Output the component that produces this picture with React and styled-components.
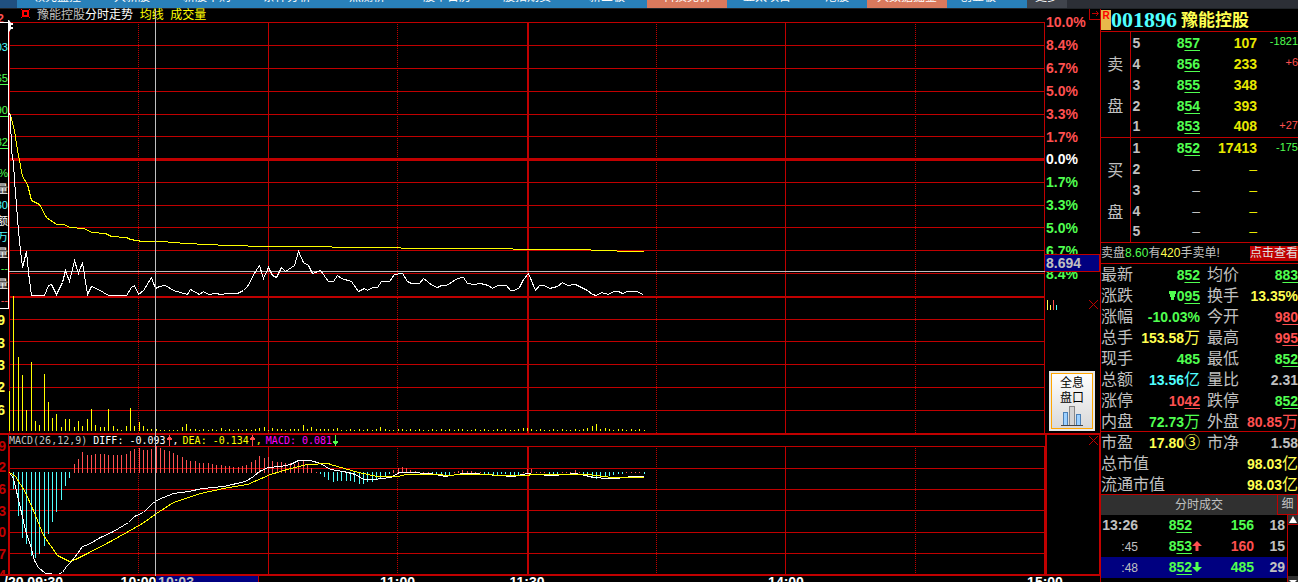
import React from "react";
import styled, { createGlobalStyle } from "styled-components";

const C = {
  line: "#c00000",
  red: "#ff5050",
  green: "#50ff50",
  yellow: "#ffff50",
  pure: "#ffff00",
  volume: "#e8e800",
  cyan: "#50ffff",
  grey: "#c0c0c0",
  white: "#ffffff",
  magenta: "#ff00ff",
  navy: "#000080",
};

const SANS = '"Liberation Sans", "Noto Sans CJK SC", sans-serif';
const SMALL = '"DejaVu Sans Mono", "Noto Sans CJK SC", monospace';

const Global = createGlobalStyle`
  *, *::before, *::after { box-sizing: border-box; }
  body { margin: 0; background: #000; color: ${C.grey}; font-family: ${SANS}; overflow: hidden; }
  button { margin: 0; padding: 0; border: 0; background: none; color: inherit; font: inherit; cursor: pointer; }
  table { border-collapse: collapse; border-spacing: 0; }
  td, th { padding: 0; font-weight: inherit; }
  svg { display: block; }
`;

const Page = styled.div`
  height: 100vh;
  display: flex;
  flex-direction: column;
  overflow: hidden;
`;

/* ---------- top tabs ---------- */
const TabBar = styled.nav`
  flex: none;
  display: flex;
  height: 9px;
  padding-left: 17px;
  overflow: hidden;
  border-bottom: 1px solid #202428;
  background: linear-gradient(90deg, #205080 0 17px, #2c2f36 17px);
`;

const Tab = styled.a`
  flex: none;
  display: flex;
  justify-content: center;
  align-items: flex-end;
  width: ${(p) => p.$w}px;
  padding: 0 ${(p) => p.$trail || 0}px 4px 0;
  background: ${(p) => p.$bg || "#2980b9"};
  color: #fff;
  font-size: 12px;
  line-height: 14px;
  text-decoration: none;
  white-space: nowrap;
`;

const TABS = [
  ["领先监控", 80], ["大新股", 70], ["新股申购", 80], ["条件分析", 80], ["热测桥", 80],
  ["股市日历", 80], ["股指期货", 80], ["新三板", 80], ["科技竞价", 80, "#d9795d"],
  ["亚太项目", 80], ["港股", 60], ["大数据掘金", 80, "#d9795d"],
  ["创业板", 80, null, 18], ["更多", 40, "#40444c"],
];

/* ---------- frame ---------- */
const Body = styled.main`
  flex: 1;
  min-height: 0;
  display: flex;
`;

const Main = styled.section`
  flex: 1;
  min-width: 0;
`;

const Charts = styled.div`
  position: relative;
`;

const Panel = styled.div`
  display: grid;
  grid-template-columns: 9px minmax(0, 1fr) 55px;
  border-bottom: 2px solid ${C.line};
`;

const PlotColumn = styled.div`
  min-width: 0;
`;

const Plot = styled.svg`
  width: 100%;
  height: ${(p) => p.$h}px;
  shape-rendering: crispEdges;
`;

const ChartTitle = styled.div`
  display: flex;
  align-items: center;
  height: 13px;
  padding-left: 12px;
  font-size: 12px;
  line-height: 13px;
  white-space: pre;
`;

const IndicatorTitle = styled.div`
  display: flex;
  align-items: center;
  height: 11px;
  font: 10px/11px ${SMALL};
  white-space: pre;
`;

const Ink = styled.span`
  margin-right: ${(p) => p.$gap || 0}px;
  color: ${(p) => p.$c};
`;

const TitleIcon = styled.svg`
  flex: none;
  width: 9px;
  height: 9px;
  margin: 0 7px 4px 0;
  shape-rendering: crispEdges;
`;

const CrossLine = styled.div`
  position: absolute;
  top: 0;
  bottom: 0;
  left: calc(9px + (100% - 64px) * 0.141);
  width: 1px;
  background: ${C.grey};
`;

const Handle = styled.svg`
  position: absolute;
  top: 11px;
  left: 8px;
  width: 6px;
  height: 12px;
`;

/* ---------- left gutter ---------- */
const Gutter = styled.div`
  min-width: 0;
  overflow: hidden;
  display: flex;
  flex-direction: column;
  border-right: ${(p) => (p.$edge ? `1px solid ${C.line}` : "0")};
`;

const GutterTop = styled.div`
  display: flex;
  justify-content: flex-end;
  align-items: center;
  height: 13px;
  padding: 6px 5px 0 0;
  color: ${C.red};
  font-size: 12px;
  font-weight: bold;
`;

const Popup = styled.div`
  display: flex;
  flex-direction: column;
  height: 287px;
  border: 1px solid #fff;
  border-left: 0;
`;

const PopupLine = styled.div`
  flex: 1;
  display: flex;
  justify-content: flex-end;
  align-items: center;
  color: ${(p) => p.$c};
  font: 11px/14px ${SANS};
  white-space: nowrap;
  text-decoration: ${(p) => (p.$u ? "underline" : "none")};
  text-underline-offset: 2px;
`;

const Scale = styled.div`
  display: flex;
  flex-direction: column;
  flex: none;
  height: ${(p) => p.$h}px;
  margin-bottom: ${(p) => p.$mb || 0}px;
  color: ${(p) => p.$c};
  font-size: 14px;
  font-weight: bold;
`;

const ScaleMark = styled.div`
  flex: 1;
  display: flex;
  justify-content: flex-end;
  align-items: center;
  padding-right: ${(p) => p.$pr}px;
`;

const POPUP = [
  ["", ""], ["03", C.cyan], ["", ""], ["65", C.green, 1], ["", ""], ["90", C.green, 1],
  ["", ""], ["82", C.green, 1], ["", ""], ["6%", C.green], ["量", C.white], ["80", C.cyan],
  ["额", C.white], ["万", C.cyan], ["量", C.white], ["--", C.green], ["量", C.white], ["--", C.red],
];

/* ---------- right axis ---------- */
const Axis = styled.div`
  position: relative;
  display: flex;
  flex-direction: column;
  padding-top: 2px;
`;

const Percents = styled.div`
  display: flex;
  flex-direction: column;
  height: 274px;
`;

const Percent = styled.div`
  flex: 1;
  display: flex;
  align-items: center;
  padding-left: 1px;
  color: ${(p) => p.$c};
  font-size: 14px;
  font-weight: bold;
`;

const PriceFlag = styled.div`
  position: absolute;
  top: 245px;
  left: 0;
  right: 0;
  height: 18px;
  border: 1px solid ${C.line};
  border-left: 0;
  background: ${C.navy};
  color: ${C.grey};
  font-size: 14px;
  font-weight: bold;
  line-height: 16px;
  padding-left: 1px;
`;

const AxisTools = styled.div`
  display: flex;
  justify-content: space-between;
  align-items: center;
  margin-top: 14px;
  padding: 0 2px;
`;

const CornerButton = styled.button`
  position: absolute;
  top: 0;
  right: 0;
  width: 11px;
  height: 11px;
  border-left: 1px solid ${C.line};
  border-bottom: 1px solid ${C.line};
`;

const PlainButton = styled.button`
  width: 9px;
  height: 9px;
`;

const HoloButton = styled.button`
  display: flex;
  flex-direction: column;
  align-items: center;
  width: 46px;
  height: 60px;
  margin: auto 0 2px 4px;
  padding: 3px 0 0;
  border: 2px solid #e8e8e8;
  background: linear-gradient(#fff, #d8d8d8);
  box-shadow: inset 0 0 0 1px #ffa500;
  color: #000;
  font-size: 12px;
  line-height: 15px;
`;

const IndicatorSide = styled.div`
  display: flex;
  justify-content: flex-end;
  align-items: flex-start;
  padding: 1px 1px 0 0;
  border-left: 2px solid ${C.line};
  border-right: 1px solid ${C.line};
`;

/* ---------- time axis ---------- */
const TimeAxis = styled.div`
  position: relative;
  display: grid;
  grid-template-columns: repeat(8, minmax(0, 1fr)) 0;
  height: 18px;
  padding: 0 55px 0 9px;
  color: #fff;
  font-size: 14px;
  font-weight: bold;
  line-height: 13px;
  white-space: nowrap;
`;

const Time = styled.span`
  justify-self: start;
  transform: translateX(${(p) => (p.$first ? "-5px" : "-50%")});
`;

const TimeFlag = styled.div`
  position: absolute;
  top: 0;
  bottom: 0;
  left: calc(9px + (100% - 64px) * 0.142);
  width: 103px;
  padding-left: 2px;
  border-right: 1px solid ${C.line};
  background: ${C.navy};
  color: ${C.grey};
`;

/* ---------- quote panel ---------- */
const Quote = styled.aside`
  flex: none;
  width: 198px;
  border-left: 1px solid ${C.line};
`;

const Head = styled.header`
  display: flex;
  align-items: center;
  height: 23px;
  border-bottom: 1px solid ${C.line};
  white-space: nowrap;
`;

const Flag = styled.span`
  width: 10px;
  height: 20px;
  background: #e8b84a;
  color: #f00;
  font-size: 10px;
  font-weight: bold;
  line-height: 12px;
  text-align: center;
`;

const Code = styled.span`
  color: ${C.cyan};
  font: bold 22px/22px "Liberation Serif", serif;
`;

const Name = styled.span`
  margin-left: 4px;
  padding-top: 2px;
  color: ${C.yellow};
  font-size: 17px;
  font-weight: bold;
  line-height: 20px;
`;

const Book = styled.table`
  width: 100%;
  table-layout: fixed;
  font-size: 14px;
  font-weight: bold;
  line-height: 20px;

  tbody {
    border-bottom: 1px solid ${C.line};
  }
`;

const BookRow = styled.tr`
  height: 21px;
`;

const Side = styled.th`
  padding-top: 4px;
  border-right: 1px solid ${C.line};
  font-size: 16px;
  font-weight: normal;
  line-height: 42px;
  text-align: center;
`;

const SideText = styled.div`
  height: 84px;
`;

const Cell = styled.td`
  padding-left: ${(p) => p.$pl || 0}px;
  color: ${(p) => p.$c || C.grey};
  text-align: ${(p) => (p.$left ? "left" : "right")};
  font-weight: ${(p) => (p.$thin ? "normal" : "bold")};
  white-space: nowrap;
`;

const Delta = styled.td`
  color: ${(p) => p.$c};
  font: 11px/18px ${SANS};
  text-align: right;
  vertical-align: top;
`;

const Under = styled.span`
  text-decoration: underline 1px;
  text-underline-offset: 2px;
  text-decoration-skip-ink: none;
`;

const Notice = styled.div`
  display: flex;
  justify-content: space-between;
  align-items: center;
  height: 21px;
  padding-top: 1px;
  border-bottom: 1px solid ${C.line};
  font: 12px/18px ${SANS};
  white-space: nowrap;
`;

const Digits = styled.span`
  color: ${(p) => p.$c || "inherit"};
  font-size: 12px;
  line-height: 18px;
`;

const Look = styled.button`
  height: 15px;
  background: ${C.line};
  color: #e0e0e0;
  line-height: 15px;
`;

const Stats = styled.dl`
  margin: 0;
  border-bottom: ${(p) => (p.$line ? `1px solid ${C.line}` : "0")};
`;

const StatRow = styled.div`
  display: grid;
  grid-template-columns: ${(p) => (p.$wide ? "auto 1fr" : "32px 67px 39px 1fr")};
  align-items: center;
  height: ${(p) => (p.$last ? 20 : 21)}px;
  padding-top: 1px;
  line-height: 20px;
  white-space: nowrap;
`;

const Label = styled.dt`
  padding-left: ${(p) => (p.$second ? 7 : 0)}px;
  font-size: 16px;
`;

const Value = styled.dd`
  display: flex;
  justify-content: flex-end;
  align-items: center;
  margin: 0;
  color: ${(p) => p.$c || C.grey};
  font-size: 14px;
  font-weight: bold;
`;

const Unit = styled.span`
  font-size: 16px;
  font-weight: normal;
`;

const TickHead = styled.div`
  display: grid;
  grid-template-columns: 20px 1fr 21px;
  height: 21px;
  border-top: 1px solid ${C.line};
  background: #303030;
  font-size: 12px;
  line-height: 20px;
  text-align: center;
`;

const TickTitle = styled.span`
  grid-column: 2;
`;

const DetailButton = styled.button`
  border: 1px solid ${C.line};
  border-top: 0;
  line-height: 19px;
`;

const Ticks = styled.div`
  display: flex;
  align-items: flex-start;
`;

const TickTable = styled.table`
  flex: 1;
  table-layout: fixed;
  width: 0;
  font-size: 14px;
  line-height: 20px;
`;

const TickRow = styled.tr`
  height: 21px;
  background: ${(p) => (p.$on ? C.navy : "transparent")};
`;

const TickArrow = styled.svg`
  width: 10px;
  height: 11px;
`;

const Scroll = styled.div`
  display: flex;
  flex-direction: column;
  justify-content: space-between;
  width: 11px;
  height: 71px;
  border-left: 1px solid ${C.line};
`;

const ScrollButton = styled.button`
  width: 10px;
  height: 10px;
  border-bottom: 1px solid ${C.line};
  background: #303030;
`;

/* ---------- data ---------- */
const X0 = 9;
const STEP = 4.317;
const xAt = (i) => Math.round(X0 + i * STEP) + 0.5;

const PRICE =
  "9,113 10,116 11,150 13,162 14,180 16,205 18,231 20,250 22,267 26,251 28,272 31,295 44,295 48,285 51,284 56,294 62,282 65,270 69,281 74,260 78,273 82,262 87,294 91,286 98,289 108,295 126,295 131,287 134,285 138,294 143,290 151,277 155,288 159,286 165,285 173,290 180,292 187,294 190,289 199,294 203,291 208,294 216,293 220,294 228,293 237,293 243,290 247,286 255,271 259,265 263,278 268,267 272,275 276,277 281,267 285,271 294,265 298,251 303,262 308,265 312,273 320,270 328,281 333,281 337,275 341,278 351,281 358,291 364,288 367,290 372,287 377,287 381,281 389,281 394,274 402,273 407,281 411,283 419,283 423,278 432,285 437,287 441,285 446,285 457,278 463,277 467,283 474,284 480,283 488,285 492,288 497,285 506,285 510,290 514,290 519,287 523,279 528,273 535,290 539,285 544,285 549,288 557,286 562,282 567,285 575,284 587,290 592,294 596,295 601,292 608,294 613,291 618,291 622,293 627,291 636,291 643,294";
const AVERAGE =
  "10,114 14,130 17,150 19,160 22,176 27,184 31,200 39,204 46,217 56,224 63,224 70,227 83,228 92,232 105,233 111,236 126,237 130,239 142,241 162,241 185,243 207,244 228,245 267,246 331,246 332,247 400,247 401,248 512,248 513,249 590,249 591,250 616,250 617,251 643,251";
const DIFF =
  "9,472 13,478 17,495 21,512 25,530 30,545 34,560 38,567 45,573 57,574 62,572 66,566 71,561 77,553 82,546 88,544 100,537 113,531 128,522 134,516 143,512 152,503 158,499 173,493 188,491 202,488 223,486 245,481 253,476 259,471 268,467 280,466 290,464 298,460 310,460 320,463 330,469 343,471 355,474 363,479 373,479 390,477 399,472 408,472 430,473 445,476 463,473 473,473 497,475 513,476 527,473 533,474 553,475 575,473 585,475 593,477 607,478 615,478 632,476 643,476";
const DEA =
  "9,472 15,476 25,492 33,510 43,535 57,555 69,561 75,559 87,553 110,541 128,531 142,523 156,513 173,502 200,493 223,488 247,484 270,474 290,468 307,464 328,463 330,464 358,472 377,476 398,476 405,474 437,474 448,475 460,474 487,474 497,475 528,475 530,474 587,474 612,477 643,477";

const VOLUME = [
  40, 135, 74, 56, 21, 69, 10, 6, 57, 29, 13, 17, 4, 12, 12, 4, 10, 5, 12, 22, 6, 4, 4, 22, 5, 2, 1, 5,
  23, 5, 9, 5, 2, 2, 2, 1, 1, 1, 1, 1, 4, 7, 2, 2, 1, 2, 1, 2, 1, 3, 1, 2, 1, 2, 1, 2, 1, 2, 3, 4, 1, 3, 2,
  2, 1, 2, 2, 2, 6, 2, 4, 2, 2, 2, 2, 2, 3, 1, 1, 2, 1, 2, 1, 2, 1, 2, 4, 2, 1, 1, 2, 2, 1, 2, 1, 2, 1, 1,
  2, 1, 2, 1, 2, 1, 2, 2, 1, 1, 2, 1, 2, 1, 1, 2, 1, 2, 1, 1, 2, 3, 3, 2, 1, 2, 1, 1, 2, 1, 2, 1, 1, 2, 1,
  2, 3, 5, 7, 2, 3, 2, 1, 2, 2, 1, 2, 1, 2, 1,
];

const MACD = [
  0, -17, -44, -66, -72, -84, -86, -82, -74, -62, -50, -40, -28, -14, -6, 9, 14, 21, 18, 18, 19, 19, 19,
  18, 18, 18, 18, 19, 22, 24, 25, 23, 23, 24, 27, 25, 23, 22, 20, 18, 16, 13, 12, 12, 10, 10, 10, 9, 8, 8,
  7, 7, 6, 6, 7, 8, 11, 13, 17, 15, 16, 12, 11, 11, 10, 10, 9, 11, 12, 9, 5, 1, -2, -5, -8, -10, -9, -9,
  -9, -9, -10, -12, -12, -10, -10, -8, -6, -4, -2, 3, 5, 6, 5, 3, 2, 1, 1, 1, -2, -3, -3, -3, -3, 1, 2, 3,
  2, 2, 1, 1, -2, -2, -3, -3, -2, -2, -3, -4, -4, 1, 4, 4, 1, 1, 1, -2, -3, -2, 1, 1, 1, 3, 1, -2, -3, -5,
  -7, -6, -5, -4, -3, -2, -2, 1, 1, 1, 1, -2,
];

const toPath = (points) => "M" + points.split(" ").join("L");

const grid = (ys) => ys.map((y) => `M9 ${y + 0.5}H1045`).join("");

function Verticals({ top, bottom }) {
  return (
    <g stroke={C.line}>
      <path
        strokeDasharray="1 1"
        d={[138, 397, 656, 915].map((x) => `M${x + 0.5} ${top}V${bottom}`).join("")}
      />
      <path d={[268, 785, 1044].map((x) => `M${x + 0.5} ${top}V${bottom}`).join("")} />
      <path strokeWidth="2" d={`M528 ${top}V${bottom}`} />
    </g>
  );
}

function PricePlot() {
  return (
    <Plot $h={411} viewBox="9 22 1036 411" preserveAspectRatio="none" role="img" aria-label="分时走势">
      <path
        stroke={C.line}
        d={grid([22, 45, 68, 91, 114, 136, 182, 205, 227, 250, 273, 319, 341, 364, 387, 410])}
      />
      <path stroke={C.line} strokeWidth="3" d="M9 159.5H1045" />
      <path stroke={C.line} strokeWidth="2" d="M9 297H1045" />
      <path stroke={C.line} d="M9.5 22V433" />
      <Verticals top={22} bottom={433} />
      <path
        stroke={C.pure}
        d={VOLUME.map((v, i) => `M${xAt(i)} 431v${-v}`).join("")}
      />
      <path stroke={C.grey} d="M9 271.5H1045" />
      <g fill="none" transform="translate(0.5 0.5)">
        <path stroke={C.pure} d={toPath(AVERAGE)} />
        <path stroke="#fff" d={toPath(PRICE)} />
      </g>
    </Plot>
  );
}

function MacdPlot() {
  const bars = (sign) =>
    MACD.map((v, i) =>
      v * sign > 0 ? `M${xAt(i)} ${sign > 0 ? 473 : 472}v${-v}` : ""
    ).join("");
  return (
    <Plot $h={128} viewBox="9 446 1036 128" preserveAspectRatio="none" role="img" aria-label="MACD">
      <path stroke={C.line} d={grid([446, 468, 489, 510, 532, 553])} />
      <path stroke={C.line} d="M9.5 446V574" />
      <Verticals top={446} bottom={574} />
      <path stroke={C.red} d={bars(1)} />
      <path stroke={C.cyan} d={bars(-1)} />
      <g fill="none" transform="translate(0.5 0.5)">
        <path stroke="#fff" d={toPath(DIFF)} />
        <path stroke={C.pure} d={toPath(DEA)} />
      </g>
    </Plot>
  );
}

const CloseGlyph = () => (
  <svg width="9" height="9" viewBox="0 0 9 9" stroke={C.line}>
    <path d="M0 0L9 9M9 0L0 9" />
  </svg>
);

const SmallArrow = ({ down }) => (
  <svg width="7" height="11" viewBox="0 0 7 11" fill={down ? C.green : C.red} shapeRendering="crispEdges">
    {down ? (
      <path d="M3 0h1v6h2v2H5v1H4v2H3V9H2V8H1V6h2z" />
    ) : (
      <path d="M3 11h1V5h2V3H5V2H4V0H3v2H2v1H1v2h2z" />
    )}
  </svg>
);

const BigArrow = ({ down }) => (
  <TickArrow viewBox="0 0 10 11" fill={down ? C.green : C.red}>
    {down ? <path d="M3.500 0h3v5H10L5 10L0 5h3.500z" /> : <path d="M3.500 10h3V5H10L5 0L0 5h3.500z" />}
  </TickArrow>
);

const Price = ({ v }) => (
  <span>
    {v.slice(0, -2)}
    <Under>{v.slice(-2)}</Under>
  </span>
);

const PERCENTS = ["10.0%", "8.4%", "6.7%", "5.0%", "3.3%", "1.7%", "0.0%", "1.7%", "3.3%", "5.0%", "6.7%", "8.4%"];

const ASKS = [
  ["5", "857", "107", "-1821"], ["4", "856", "233", "+6"], ["3", "855", "348", ""],
  ["2", "854", "393", ""], ["1", "853", "408", "+27"],
];
const BIDS = [
  ["1", "852", "17413", "-175"], ["2"], ["3"], ["4"], ["5"],
];

const STATS = [
  ["最新", "852", C.green, "p", "均价", "883", C.green, "p"],
  ["涨跌", "095", C.green, "d", "换手", "13.35%", C.yellow],
  ["涨幅", "-10.03%", C.green, "", "今开", "980", C.red, "p"],
  ["总手", "153.58", C.yellow, "万", "最高", "995", C.red, "p"],
  ["现手", "485", C.green, "", "最低", "852", C.green, "p"],
  ["总额", "13.56", C.cyan, "亿", "量比", "2.31", C.grey],
  ["涨停", "1042", C.red, "p", "跌停", "852", C.green, "p"],
  ["内盘", "72.73", C.green, "万", "外盘", "80.85", C.red, "万"],
];

function StatValue({ v, c, kind }) {
  return (
    <Value $c={c}>
      {kind === "d" && (
        <svg width="8" height="10" viewBox="0 0 8 10" fill={C.green}>
          <path d="M0 0H7V3H6V6H5V9H2V6H1V3H0Z" />
        </svg>
      )}
      {kind === "p" || kind === "d" ? <Price v={v} /> : v}
      {kind && !"pd".includes(kind) && <Unit>{kind}</Unit>}
    </Value>
  );
}

function BookSide({ chars, rows }) {
  return (
    <tbody>
      {rows.map(([level, price, size, delta], i) => (
        <BookRow key={level}>
          {i === 0 && (
            <Side rowSpan={5} scope="rowgroup">
              <SideText>
                {chars[0]}
                <br />
                {chars[1]}
              </SideText>
            </Side>
          )}
          <Cell $left $pl={2}>{level}</Cell>
          <Cell $c={price ? C.green : C.grey} $thin={!price}>{price ? <Price v={price} /> : "–"}</Cell>
          <Cell $c={C.volume} $thin={!size}>{size || "–"}</Cell>
          <Delta $c={delta && delta[0] === "+" ? C.red : C.green}>{delta}</Delta>
        </BookRow>
      ))}
    </tbody>
  );
}

function QuotePanel() {
  return (
    <Quote>
      <Head>
        <Flag>R</Flag>
        <Code>001896</Code>
        <Name>豫能控股</Name>
      </Head>
      <Book>
        <colgroup>
          <col style={{ width: 29 }} />
          <col style={{ width: 15 }} />
          <col style={{ width: 55 }} />
          <col style={{ width: 57 }} />
          <col />
        </colgroup>
        <BookSide chars="卖盘" rows={ASKS} />
        <BookSide chars="买盘" rows={BIDS} />
      </Book>
      <Notice>
        <span>
          卖盘<Digits $c={C.green}>8.60</Digits>有<Digits $c={C.yellow}>420</Digits>手卖单<Digits>!</Digits>
        </span>
        <Look type="button">点击查看</Look>
      </Notice>
      <Stats $line>
        {STATS.map(([a, v, c, k, b, w, d, m], i) => (
          <StatRow key={a} $last={i === STATS.length - 1}>
            <Label>{a}</Label>
            <StatValue v={v} c={c} kind={k} />
            <Label $second>{b}</Label>
            <StatValue v={w} c={d} kind={m} />
          </StatRow>
        ))}
      </Stats>
      <Stats>
        <StatRow>
          <Label>市盈</Label>
          <StatValue v="17.80" c={C.yellow} kind="③" />
          <Label $second>市净</Label>
          <StatValue v="1.58" />
        </StatRow>
        <StatRow $wide>
          <Label>总市值</Label>
          <StatValue v="98.03" c={C.yellow} kind="亿" />
        </StatRow>
        <StatRow $wide $last>
          <Label>流通市值</Label>
          <StatValue v="98.03" c={C.yellow} kind="亿" />
        </StatRow>
      </Stats>
      <TickHead>
        <TickTitle>分时成交</TickTitle>
        <DetailButton type="button">细</DetailButton>
      </TickHead>
      <Ticks>
        <TickTable>
          <colgroup>
            <col style={{ width: 37 }} />
            <col style={{ width: 54 }} />
            <col style={{ width: 12 }} />
            <col style={{ width: 50 }} />
            <col style={{ width: 31 }} />
            <col />
          </colgroup>
          <tbody>
            <TickRow>
              <Cell>13:26</Cell>
              <Cell $c={C.green}><Price v="852" /></Cell>
              <td />
              <Cell $c={C.green}>156</Cell>
              <Cell>18</Cell>
              <td />
            </TickRow>
            <TickRow>
              <Cell $thin><Digits>:45</Digits></Cell>
              <Cell $c={C.green}><Price v="853" /></Cell>
              <td><BigArrow /></td>
              <Cell $c={C.red}>160</Cell>
              <Cell>15</Cell>
              <td />
            </TickRow>
            <TickRow $on>
              <Cell $thin><Digits>:48</Digits></Cell>
              <Cell $c={C.green}><Price v="852" /></Cell>
              <td><BigArrow down /></td>
              <Cell $c={C.green}>485</Cell>
              <Cell>29</Cell>
              <td />
            </TickRow>
          </tbody>
        </TickTable>
        <Scroll>
          <ScrollButton type="button" aria-label="向上">
            <svg width="10" height="9" viewBox="0 0 10 9" fill="#fff"><path d="M5 1L9 8H1Z" /></svg>
          </ScrollButton>
          <ScrollButton type="button" aria-label="向下">
            <svg width="10" height="9" viewBox="0 0 10 9" fill="#fff"><path d="M1 4H9L5 8Z" /></svg>
          </ScrollButton>
        </Scroll>
      </Ticks>
    </Quote>
  );
}

export default function App() {
  return (
    <Page>
      <Global />
      <TabBar>
        {TABS.map(([name, w, bg, trail]) => (
          <Tab key={name} href="#" $w={w} $bg={bg} $trail={trail}>{name}</Tab>
        ))}
      </TabBar>
      <Body>
        <Main>
          <Charts>
            <Panel>
              <Gutter>
                <GutterTop>2</GutterTop>
                <Popup>
                  {POPUP.map(([t, c, u], i) => (
                    <PopupLine key={i} $c={c} $u={u}>{t}</PopupLine>
                  ))}
                </Popup>
                <Scale $h={112} $c={C.yellow}>
                  {["9", "3", "3", "2", "6"].map((t, i) => <ScaleMark key={i} $pr={4}>{t}</ScaleMark>)}
                </Scale>
              </Gutter>
              <PlotColumn>
                <ChartTitle>
                  <TitleIcon viewBox="0 0 9 9">
                    <path
                      fill="#f00"
                      fillRule="evenodd"
                      d="M0 0h1v1h7V0h1v1H8v7h1v1H8V8H1v1H0V8h1V1H0zM3 3v3h3V3z"
                    />
                  </TitleIcon>
                  <Ink $c={C.grey}>豫能控股</Ink>
                  <Ink $c={C.white}>分时走势</Ink>
                  <Ink $c={C.pure}>{"  均线  成交量"}</Ink>
                </ChartTitle>
                <PricePlot />
              </PlotColumn>
              <Axis>
                <CornerButton type="button" aria-label="展开">
                  <svg width="10" height="10" viewBox="0 0 10 10" fill="none" stroke={C.line}>
                    <path d="M2 4.500H8M6 2L8.500 4.500L6 7" />
                  </svg>
                </CornerButton>
                <Percents>
                  {PERCENTS.map((t, i) => (
                    <Percent key={i} $c={i < 6 ? C.red : i === 6 ? C.white : C.green}>{t}</Percent>
                  ))}
                </Percents>
                <PriceFlag>8.694</PriceFlag>
                <AxisTools>
                  <svg width="11" height="11" viewBox="0 0 11 11" shapeRendering="crispEdges">
                    <path stroke={C.yellow} d="M0.500 1V11M3.500 6V11" />
                    <path stroke={C.red} d="M6.500 1V11" />
                    <path stroke={C.cyan} d="M9.500 6V11" />
                  </svg>
                  <PlainButton type="button" aria-label="关闭"><CloseGlyph /></PlainButton>
                </AxisTools>
                <HoloButton type="button">
                  <span>全息</span>
                  <span>盘口</span>
                  <svg width="22" height="20" viewBox="0 0 22 20">
                    <rect x="2.500" y="6.500" width="4" height="13" fill="#9cd0ff" stroke="#4a7fb5" />
                    <rect x="8.500" y="0.500" width="5" height="19" fill="#d4d4d4" stroke="#888" />
                    <rect x="15.500" y="8.500" width="4" height="11" fill="#9cd0ff" stroke="#4a7fb5" />
                    <path stroke="#444" d="M0 19.500H22" />
                  </svg>
                </HoloButton>
              </Axis>
            </Panel>
            <Panel>
              <Gutter $edge>
                <Scale $h={151} $c={C.line} $mb={-12}>
                  {["9", "2", "6", "3", "0", "7", "4"].map((t, i) => <ScaleMark key={i} $pr={2}>{t}</ScaleMark>)}
                </Scale>
              </Gutter>
              <PlotColumn>
                <IndicatorTitle>
                  <Ink $c={C.grey}>MACD(26,12,9) </Ink>
                  <Ink $c={C.white}>DIFF: -0.093</Ink>
                  <SmallArrow />
                  <Ink $c={C.white} $gap={4}>,</Ink>
                  <Ink $c={C.pure}>DEA: -0.134</Ink>
                  <SmallArrow />
                  <Ink $c={C.pure} $gap={4}>,</Ink>
                  <Ink $c={C.magenta}>MACD: 0.081</Ink>
                  <SmallArrow down />
                </IndicatorTitle>
                <MacdPlot />
              </PlotColumn>
              <IndicatorSide>
                <PlainButton type="button" aria-label="关闭"><CloseGlyph /></PlainButton>
              </IndicatorSide>
            </Panel>
            <CrossLine />
            <Handle viewBox="0 0 6 12" fill="#fff">
              <path d="M0 0H1L3 3H5V5H3V7H5V9H3L1 12H0Z" />
            </Handle>
          </Charts>
          <TimeAxis>
            <Time $first>/20 09:30</Time>
            <Time>10:00</Time>
            <Time />
            <Time>11:00</Time>
            <Time>11:30</Time>
            <Time />
            <Time>14:00</Time>
            <Time />
            <Time>15:00</Time>
            <TimeFlag>10:03</TimeFlag>
          </TimeAxis>
        </Main>
        <QuotePanel />
      </Body>
    </Page>
  );
}
